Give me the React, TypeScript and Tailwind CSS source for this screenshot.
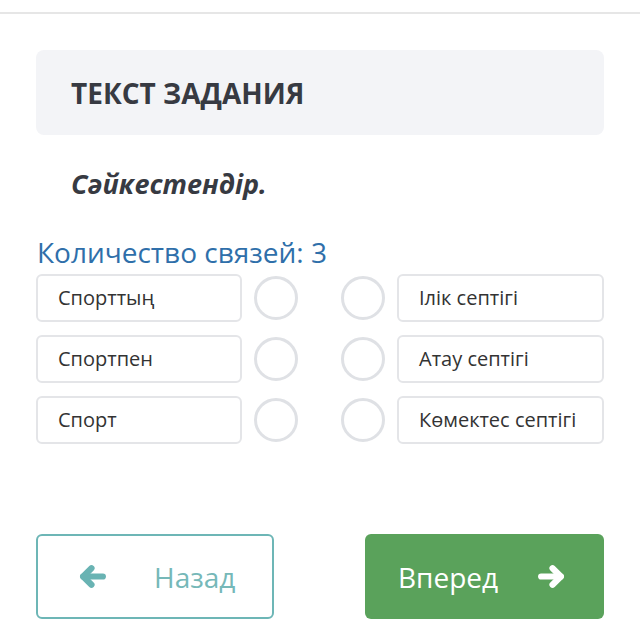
const left = ["Спорттың", "Спортпен", "Спорт"];
const right = ["Ілік септігі", "Атау септігі", "Көмектес септігі"];

function Arrow({ dir, className }: { dir: "left" | "right"; className?: string }) {
  return (
    <svg viewBox="0 0 28 24" className={className} fill="none" stroke="currentColor" strokeWidth={6} strokeLinecap="round" strokeLinejoin="round">
      {dir === "left" ? (
        <>
          <path d="M24 12H5" />
          <path d="M13 4L5 12L13 20" />
        </>
      ) : (
        <>
          <path d="M4 12H23" />
          <path d="M15 4L23 12L15 20" />
        </>
      )}
    </svg>
  );
}

export default function App() {
  return (
    <div className="w-[640px] h-[641px] bg-white font-['Open_Sans',sans-serif] overflow-hidden">
      <div className="h-[12px]" />
      <div className="h-[2px] bg-[#e6e6e6]" />

      <div className="px-[36px] pt-[36px]">
        {/* Task header */}
        <div className="h-[85px] rounded-lg bg-[#f3f4f7] flex items-center px-[35px]">
          <h2 className="text-[28px] font-bold text-[#373a42] leading-none">ТЕКСТ ЗАДАНИЯ</h2>
        </div>

        <p className="mt-[35px] pl-[35px] text-[27px] font-bold italic text-[#373a42] leading-none">
          Сәйкестендір.
        </p>

        <div className="mt-[41px] pl-[1px] text-[28px] text-[#2f6faa] leading-none">
          Количество связей: 3
        </div>

        {/* Matching rows */}
        <div className="mt-[8px] flex flex-col gap-[13px]">
          {left.map((l, i) => (
            <div key={l} className="flex items-center h-[48px]">
              <div className="w-[206px] h-[48px] border-2 border-[#e4e5e8] rounded-md flex items-center pl-[20px] text-[20px] text-[#333]">
                {l}
              </div>
              <div className="ml-[12px] w-[44px] h-[44px] rounded-full border-[3px] border-[#dfe1e5]" />
              <div className="ml-[43px] w-[44px] h-[44px] rounded-full border-[3px] border-[#dfe1e5]" />
              <div className="ml-[12px] w-[207px] h-[48px] border-2 border-[#e4e5e8] rounded-md flex items-center pl-[20px] text-[20px] text-[#333]">
                {right[i]}
              </div>
            </div>
          ))}
        </div>

        {/* Navigation */}
        <div className="mt-[90px] flex justify-between">
          <button className="w-[238px] h-[85px] border-2 border-[#6db6b6] rounded-md flex items-center pl-[40px] text-[#76b8b8] text-[28px]">
            <Arrow dir="left" className="w-[29px] h-[25px] text-[#69b3b3]" />
            <span className="ml-[47px]">Назад</span>
          </button>
          <button className="w-[239px] h-[85px] bg-[#5aa25b] rounded-md flex items-center pl-[33px] text-white text-[28px]">
            <span>Вперед</span>
            <Arrow dir="right" className="ml-[39px] w-[29px] h-[25px]" />
          </button>
        </div>
      </div>
    </div>
  );
}
